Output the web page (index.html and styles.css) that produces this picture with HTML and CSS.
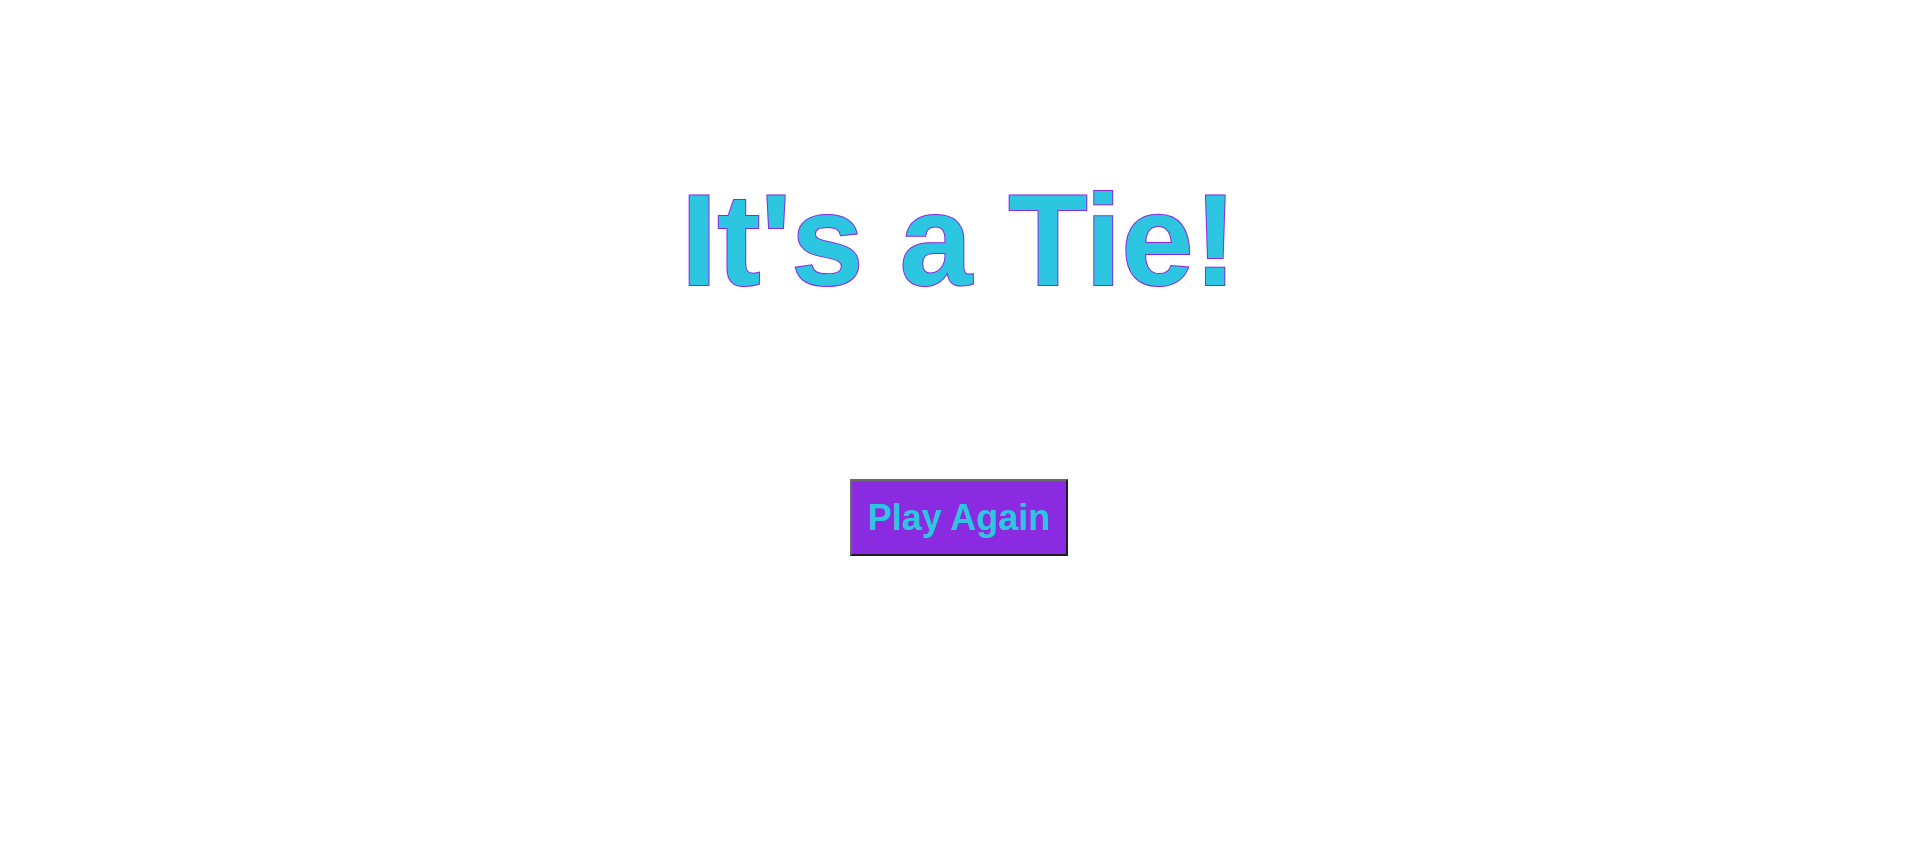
FILE: index.html
```html
<!DOCTYPE html>
<html>
<head>
<meta charset="utf-8">
<link rel="stylesheet" href="styles.css">
</head>
<body>
<main class="screen">
  <h1 class="result">It's a Tie!</h1>
  <button class="again">Play Again</button>
</main>
</body>
</html>
```
FILE: styles.css
```css
html, body {
  margin: 0;
  padding: 0;
  background: #ffffff;
}
.screen {
  display: flex;
  flex-direction: column;
  align-items: center;
  font-family: "Liberation Sans", Arial, sans-serif;
  padding-top: 169px;
}
.result {
  margin: 0;
  font-size: 130px;
  font-weight: 700;
  line-height: 143px;
  color: #2cc6e0;
  -webkit-text-stroke: 2px #8a2be2;
  paint-order: stroke fill;
  text-shadow: 0 0 2px rgba(138, 43, 226, 0.45);
}
.again {
  margin-top: 167px;
  font-family: "Liberation Sans", Arial, sans-serif;
  font-size: 36px;
  font-weight: 700;
  line-height: 41px;
  color: #2cc6e0;
  background: #8a2be2;
  padding: 16px 16px;
  border-style: solid;
  border-width: 2px;
  border-color: #6b6b6b #1e1e1e #1e1e1e #6b6b6b;
  border-radius: 0;
  cursor: pointer;
}
```
